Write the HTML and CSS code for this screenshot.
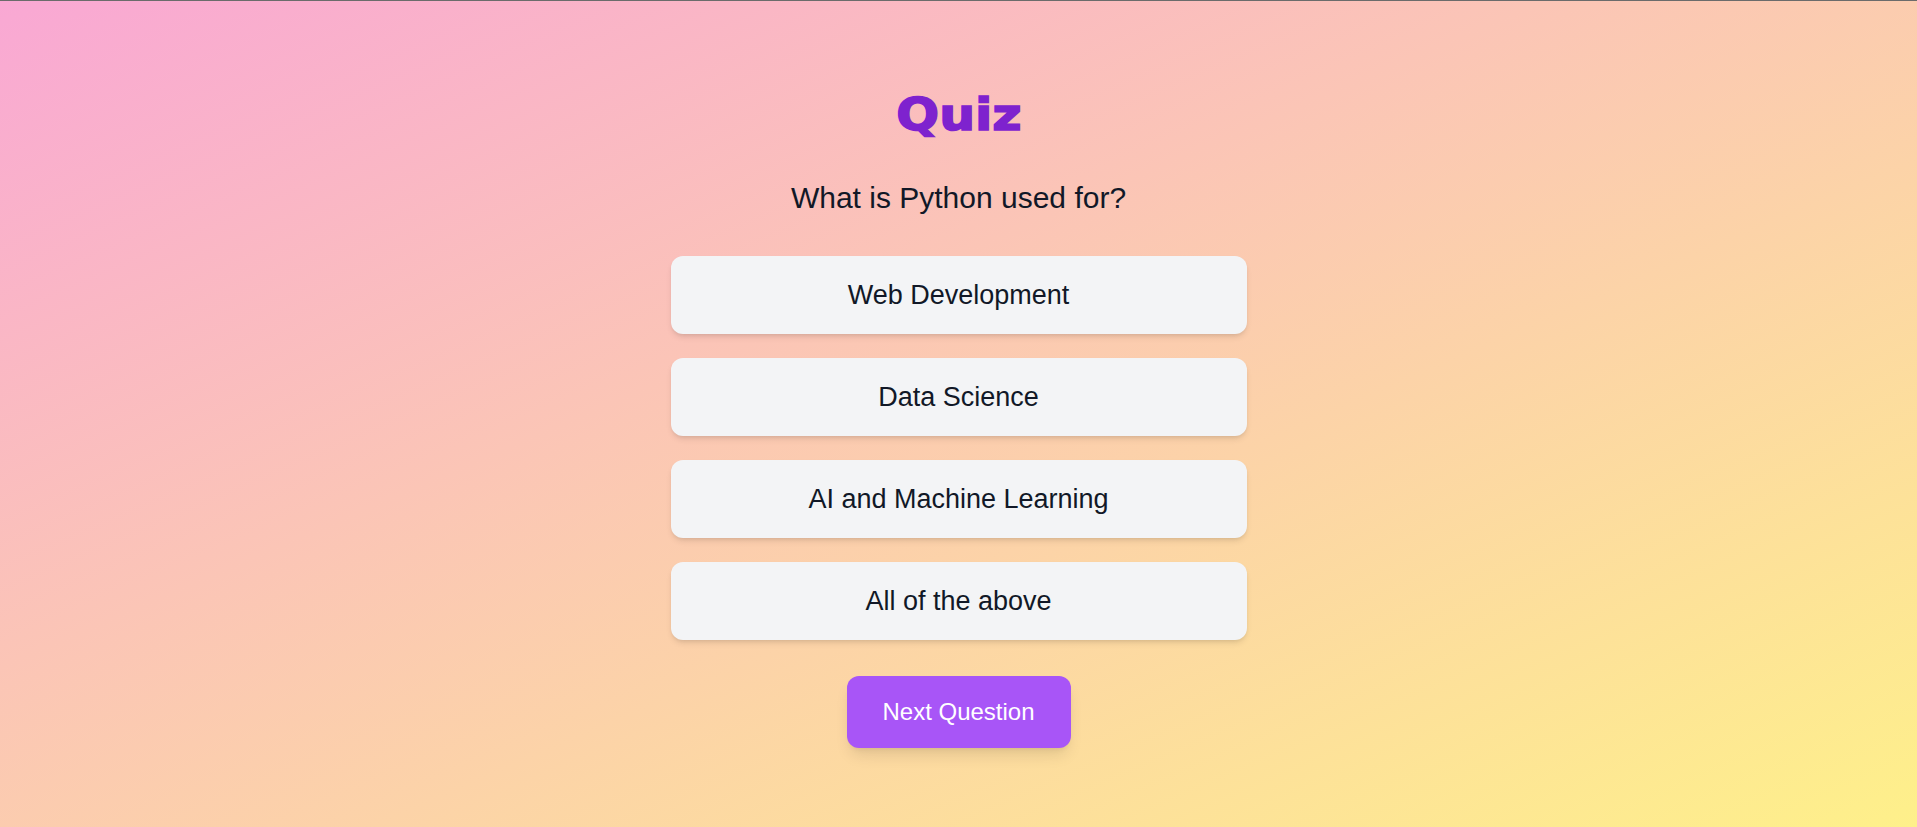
FILE: index.html
```html
<!DOCTYPE html>
<html lang="en">
<head>
<meta charset="utf-8">
<title>Quiz</title>
<link rel="stylesheet" href="styles.css">
</head>
<body>
<main class="quiz">
  <h1 class="quiz-title">Quiz</h1>
  <p class="quiz-question">What is Python used for?</p>
  <div class="options">
    <button class="option">Web Development</button>
    <button class="option">Data Science</button>
    <button class="option">AI and Machine Learning</button>
    <button class="option">All of the above</button>
  </div>
  <button class="next-btn">Next Question</button>
</main>
</body>
</html>
```
FILE: styles.css
```css
html, body {
  margin: 0;
  padding: 0;
}
body {
  min-height: 100vh;
  box-sizing: border-box;
  border-top: 1px solid #6b6b6b;
  background: linear-gradient(to bottom right, #f9a8d4, #fef08a);
  font-family: "Liberation Sans", Arial, sans-serif;
  color: #111827;
}
.quiz {
  display: flex;
  flex-direction: column;
  align-items: center;
  padding-top: 88px;
}
.quiz-title {
  margin: 0;
  font-family: "DejaVu Sans", sans-serif;
  font-weight: 700;
  font-size: 45px;
  line-height: 52px;
  color: #7e22ce;
  -webkit-text-stroke: 1.6px #7e22ce;
  transform: scaleX(1.12);
}
.quiz-question {
  margin: 39px 0 0;
  font-size: 30px;
  line-height: 36px;
  color: #111827;
}
.options {
  margin-top: 40px;
  width: 576px;
  display: flex;
  flex-direction: column;
  gap: 24px;
}
.option {
  display: block;
  width: 100%;
  height: 78px;
  border: none;
  border-radius: 12px;
  background: #f3f4f6;
  font-family: "Liberation Sans", Arial, sans-serif;
  font-size: 27px;
  color: #111827;
  box-shadow: 0 4px 6px -1px rgba(0,0,0,0.1), 0 2px 4px -2px rgba(0,0,0,0.1);
  cursor: pointer;
  padding: 0;
}
.next-btn {
  margin-top: 36px;
  width: 224px;
  height: 72px;
  border: none;
  border-radius: 12px;
  background: #a855f7;
  color: #ffffff;
  font-family: "Liberation Sans", Arial, sans-serif;
  font-size: 24px;
  box-shadow: 0 10px 15px -3px rgba(0,0,0,0.1), 0 4px 6px -4px rgba(0,0,0,0.1);
  cursor: pointer;
  padding: 0;
}
```
